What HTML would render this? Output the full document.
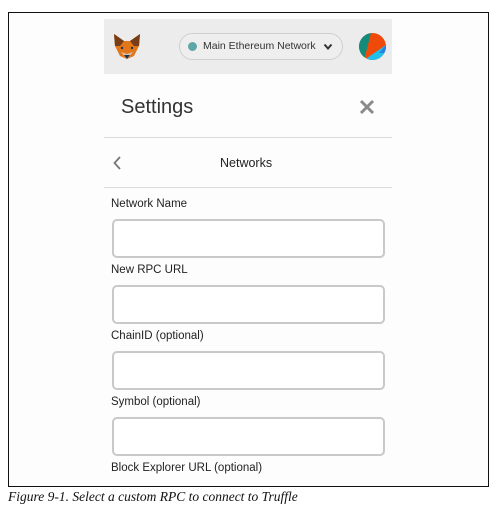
<!DOCTYPE html>
<html><head><meta charset="utf-8"><style>
*{margin:0;padding:0;box-sizing:border-box}
body{width:497px;height:515px;background:#fff;position:relative;overflow:hidden;font-family:"Liberation Sans",Arial,sans-serif;color:#222}
.frame{position:absolute;left:8px;top:12px;width:481px;height:475px;border:1px solid #111;background:#fdfdfd}
.hdr{position:absolute;left:104px;top:19px;width:288px;height:55px;background:#ececec}
.pill{position:absolute;left:179px;top:33px;width:164px;height:27px;border:1.5px solid #cfcfcf;border-radius:14px;background:#eeeeee;font-size:10.5px;color:#333;line-height:24px;padding-left:23px;white-space:nowrap}
.dot{position:absolute;left:8px;top:8px;width:9px;height:9px;border-radius:50%;background:#5fa6a6}
.abs{position:absolute}
.lbl{position:absolute;left:111px;font-size:11.5px;color:#222}
.inp{position:absolute;left:112px;width:273px;height:39px;border:2px solid #c9c9c9;border-radius:5px;background:#fff}
.line{position:absolute;left:104px;width:288px;height:1px;background:#dcdcdc}
</style></head><body>
<div class="frame"></div>
<div class="hdr"></div>
<svg class="abs" style="left:112px;top:32px" width="30" height="30" viewBox="0 0 30 30">
<polygon points="2,2 12,9 18,9 28,2 27,14 22,24 15,27 8,24 3,14" fill="#e2761b"/>
<polygon points="2,2 12,9 8,14 3,14" fill="#763d16"/>
<polygon points="28,2 18,9 22,14 27,14" fill="#763d16"/>
<polygon points="9,20 15,27 21,20 15,22" fill="#d7c1b3"/>
<polygon points="12,23 15,27 18,23" fill="#233447"/>
<circle cx="10" cy="16" r="1.2" fill="#233447"/><circle cx="20" cy="16" r="1.2" fill="#233447"/>
</svg>
<div class="pill"><span class="dot"></span>Main Ethereum Network
<svg class="abs" style="left:143px;top:9px" width="10" height="8" viewBox="0 0 10 8"><path d="M1.5 1.5 L5 5.5 L8.5 1.5" stroke="#333" stroke-width="2" fill="none"/></svg></div>
<svg class="abs" style="left:359px;top:33px" width="27" height="27" viewBox="0 0 27 27">
<defs><clipPath id="c"><circle cx="13.5" cy="13.5" r="13.5"/></clipPath></defs>
<g clip-path="url(#c)"><rect width="27" height="27" fill="#f04a0a"/>
<polygon points="0,0 12,0 5,27 0,27" fill="#128b7a"/>
<polygon points="5,27 27,12 27,27" fill="#1fc0ec"/>
<polygon points="20,20 27,12 27,20" fill="#2a7de1"/></g></svg>
<div class="abs" style="left:121px;top:96px;font-size:20px;color:#333">Settings</div>
<svg class="abs" style="left:359px;top:99px" width="16" height="16" viewBox="0 0 16 16"><path d="M2 2L14 14M14 2L2 14" stroke="#8a8a8a" stroke-width="3"/></svg>
<div class="line" style="top:137px"></div>
<svg class="abs" style="left:112px;top:155px" width="10" height="16" viewBox="0 0 10 16"><path d="M8 2L2.5 8L8 14" stroke="#777" stroke-width="1.8" fill="none"/></svg>
<div class="abs" style="left:220px;top:156px;font-size:12.5px;color:#222">Networks</div>
<div class="line" style="top:187px"></div>
<div class="lbl" style="top:198px">Network Name</div>
<div class="inp" style="top:219px"></div>
<div class="lbl" style="top:264px">New RPC URL</div>
<div class="inp" style="top:285px"></div>
<div class="lbl" style="top:330px">ChainID (optional)</div>
<div class="inp" style="top:351px"></div>
<div class="lbl" style="top:396px">Symbol (optional)</div>
<div class="inp" style="top:417px"></div>
<div class="lbl" style="top:462px">Block Explorer URL (optional)</div>
<div class="abs" style="left:8px;top:489px;font-family:'Liberation Serif',serif;font-style:italic;font-size:13.5px;color:#111">Figure 9-1. Select a custom RPC to connect to Truffle</div>
</body></html>
